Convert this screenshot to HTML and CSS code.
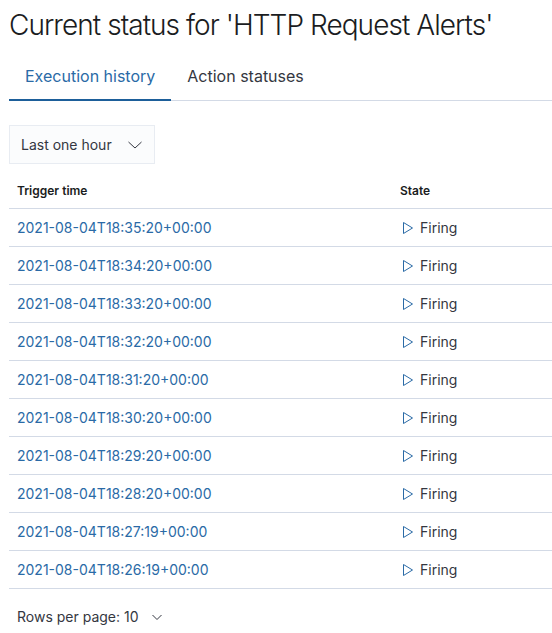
FILE: index.html
```html
<!DOCTYPE html>
<html lang="en">
<head>
<meta charset="utf-8">
<title>Current status</title>
<link rel="stylesheet" href="styles.css">
</head>
<body>
<div class="page">
  <h1 class="title">Current status for 'HTTP Request Alerts'</h1>
  <div class="tabs">
    <div class="tab tab-selected">Execution history</div>
    <div class="tab">Action statuses</div>
  </div>
  <div class="select">
    <span class="select-label">Last one hour</span>
    <svg class="chev" width="16" height="16" viewBox="0 0 16 16"><path d="M1.5 5 L8 11 L14.5 5" fill="none" stroke="#343741" stroke-width="1"/></svg>
  </div>
  <div class="table">
    <div class="row head">
      <div class="cell">Trigger time</div>
      <div class="cell">State</div>
    </div>
    <div class="row"><div class="cell link">2021-08-04T18:35:20+00:00</div><div class="cell state"><svg class="play" width="16" height="16" viewBox="0 0 16 16"><path d="M3.5 2.5 L12.5 8 L3.5 13.5 Z" fill="none" stroke="#2a6aa6" stroke-width="1" stroke-linejoin="round"/></svg><span>Firing</span></div></div>
    <div class="row"><div class="cell link">2021-08-04T18:34:20+00:00</div><div class="cell state"><svg class="play" width="16" height="16" viewBox="0 0 16 16"><path d="M3.5 2.5 L12.5 8 L3.5 13.5 Z" fill="none" stroke="#2a6aa6" stroke-width="1" stroke-linejoin="round"/></svg><span>Firing</span></div></div>
    <div class="row"><div class="cell link">2021-08-04T18:33:20+00:00</div><div class="cell state"><svg class="play" width="16" height="16" viewBox="0 0 16 16"><path d="M3.5 2.5 L12.5 8 L3.5 13.5 Z" fill="none" stroke="#2a6aa6" stroke-width="1" stroke-linejoin="round"/></svg><span>Firing</span></div></div>
    <div class="row"><div class="cell link">2021-08-04T18:32:20+00:00</div><div class="cell state"><svg class="play" width="16" height="16" viewBox="0 0 16 16"><path d="M3.5 2.5 L12.5 8 L3.5 13.5 Z" fill="none" stroke="#2a6aa6" stroke-width="1" stroke-linejoin="round"/></svg><span>Firing</span></div></div>
    <div class="row"><div class="cell link">2021-08-04T18:31:20+00:00</div><div class="cell state"><svg class="play" width="16" height="16" viewBox="0 0 16 16"><path d="M3.5 2.5 L12.5 8 L3.5 13.5 Z" fill="none" stroke="#2a6aa6" stroke-width="1" stroke-linejoin="round"/></svg><span>Firing</span></div></div>
    <div class="row"><div class="cell link">2021-08-04T18:30:20+00:00</div><div class="cell state"><svg class="play" width="16" height="16" viewBox="0 0 16 16"><path d="M3.5 2.5 L12.5 8 L3.5 13.5 Z" fill="none" stroke="#2a6aa6" stroke-width="1" stroke-linejoin="round"/></svg><span>Firing</span></div></div>
    <div class="row"><div class="cell link">2021-08-04T18:29:20+00:00</div><div class="cell state"><svg class="play" width="16" height="16" viewBox="0 0 16 16"><path d="M3.5 2.5 L12.5 8 L3.5 13.5 Z" fill="none" stroke="#2a6aa6" stroke-width="1" stroke-linejoin="round"/></svg><span>Firing</span></div></div>
    <div class="row"><div class="cell link">2021-08-04T18:28:20+00:00</div><div class="cell state"><svg class="play" width="16" height="16" viewBox="0 0 16 16"><path d="M3.5 2.5 L12.5 8 L3.5 13.5 Z" fill="none" stroke="#2a6aa6" stroke-width="1" stroke-linejoin="round"/></svg><span>Firing</span></div></div>
    <div class="row"><div class="cell link">2021-08-04T18:27:19+00:00</div><div class="cell state"><svg class="play" width="16" height="16" viewBox="0 0 16 16"><path d="M3.5 2.5 L12.5 8 L3.5 13.5 Z" fill="none" stroke="#2a6aa6" stroke-width="1" stroke-linejoin="round"/></svg><span>Firing</span></div></div>
    <div class="row"><div class="cell link">2021-08-04T18:26:19+00:00</div><div class="cell state"><svg class="play" width="16" height="16" viewBox="0 0 16 16"><path d="M3.5 2.5 L12.5 8 L3.5 13.5 Z" fill="none" stroke="#2a6aa6" stroke-width="1" stroke-linejoin="round"/></svg><span>Firing</span></div></div>
  </div>
  <div class="pager">
    <span>Rows per page: 10</span>
    <svg class="chev-sm" width="12" height="12" viewBox="0 0 12 12"><path d="M1.5 4 L6 8.5 L10.5 4" fill="none" stroke="#343741" stroke-width="1"/></svg>
  </div>
</div>
</body>
</html>
```

FILE: styles.css
```css
html, body {
  margin: 0;
  padding: 0;
  background: #ffffff;
}

body {
  font-family: Inter, "Noto Sans", "Liberation Sans", sans-serif;
  color: #343741;
  overflow: hidden;
}

.page {
  padding-left: 9px;
}

.title {
  margin: 5px 0 0 0;
  font-size: 28px;
  line-height: 40px;
  font-weight: 300;
  letter-spacing: -0.95px;
  color: #1a1c21;
  white-space: nowrap;
}

.tabs {
  display: flex;
  margin-top: 9px;
  box-shadow: inset 0 -1px 0 #d3dae6;
}

.tab {
  padding: 10px 16px 13px 16px;
  font-size: 16px;
  line-height: 24px;
  color: #343741;
}

.tab-selected {
  color: #2a6aa6;
  box-shadow: inset 0 -2px 0 #1d5f9a;
}

.select {
  margin-top: 24px;
  width: 146px;
  height: 39px;
  box-sizing: border-box;
  border: 1px solid #e8ecf2;
  background: #fbfcfd;
  display: flex;
  align-items: center;
  justify-content: space-between;
  padding: 0 11px 0 11px;
  font-size: 14px;
  color: #343741;
}

.chev {
  display: block;
}

.table {
  margin-top: 8px;
}

.row {
  display: grid;
  grid-template-columns: 383px 1fr;
  border-bottom: 1px solid #d3dae6;
  height: 38px;
  box-sizing: border-box;
  align-items: center;
  font-size: 14px;
}

.row.head {
  height: 37px;
  font-size: 12px;
  font-weight: 600;
  color: #1a1c21;
}

.cell {
  padding: 0 8px;
}

.link {
  color: #2a6aa6;
}

.state {
  display: flex;
  align-items: center;
  gap: 4px;
  color: #343741;
}

.play {
  display: block;
}

.pager {
  margin-top: 16px;
  padding-left: 8px;
  display: flex;
  align-items: center;
  gap: 12px;
  font-size: 14px;
  line-height: 24px;
  color: #343741;
}

.chev-sm {
  display: block;
}
```
